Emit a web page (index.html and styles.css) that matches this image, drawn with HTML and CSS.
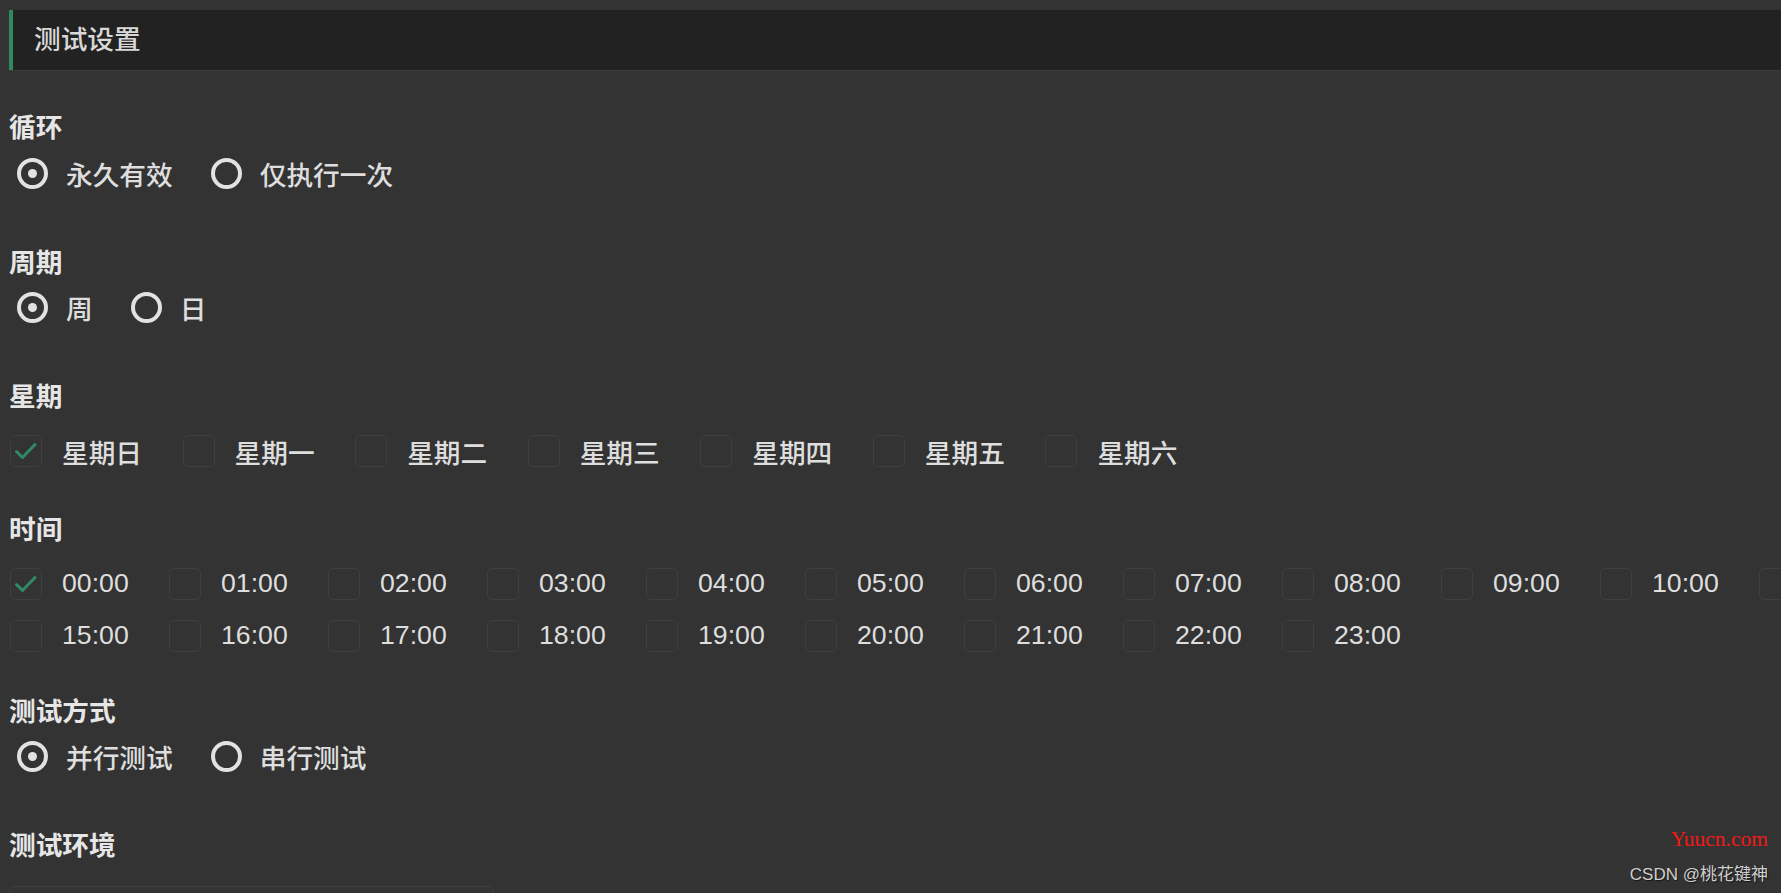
FILE: index.html
```html
<!DOCTYPE html>
<html lang="zh-CN">
<head>
<meta charset="utf-8">
<title>测试设置</title>
<link rel="stylesheet" href="styles.css">
</head>
<body>
<div class="page">
  <div class="panel-title">测试设置</div>

  <div class="field field-first">
    <div class="field-label">循环</div>
    <div class="radio-group">
      <label class="radio checked"><span class="radio-circle"></span><span class="radio-text">永久有效</span></label>
      <label class="radio"><span class="radio-circle"></span><span class="radio-text">仅执行一次</span></label>
    </div>
  </div>

  <div class="field">
    <div class="field-label">周期</div>
    <div class="radio-group">
      <label class="radio checked"><span class="radio-circle"></span><span class="radio-text">周</span></label>
      <label class="radio"><span class="radio-circle"></span><span class="radio-text">日</span></label>
    </div>
  </div>

  <div class="field field-week">
    <div class="field-label">星期</div>
    <div class="check-row">
      <label class="check checked"><span class="check-box"><svg viewBox="0 0 32 32" width="32" height="32"><polyline points="6.5,16.5 12.5,22.5 25,9.5" fill="none" stroke="#2f8c62" stroke-width="3" stroke-linecap="round" stroke-linejoin="round"/></svg></span><span class="check-text">星期日</span></label>
      <label class="check"><span class="check-box"></span><span class="check-text">星期一</span></label>
      <label class="check"><span class="check-box"></span><span class="check-text">星期二</span></label>
      <label class="check"><span class="check-box"></span><span class="check-text">星期三</span></label>
      <label class="check"><span class="check-box"></span><span class="check-text">星期四</span></label>
      <label class="check"><span class="check-box"></span><span class="check-text">星期五</span></label>
      <label class="check"><span class="check-box"></span><span class="check-text">星期六</span></label>
    </div>
  </div>

  <div class="field field-time">
    <div class="field-label">时间</div>
    <div class="time-grid">
      <label class="check checked"><span class="check-box"><svg viewBox="0 0 32 32" width="32" height="32"><polyline points="6.5,16.5 12.5,22.5 25,9.5" fill="none" stroke="#2f8c62" stroke-width="3" stroke-linecap="round" stroke-linejoin="round"/></svg></span><span class="check-text">00:00</span></label>
      <label class="check"><span class="check-box"></span><span class="check-text">01:00</span></label>
      <label class="check"><span class="check-box"></span><span class="check-text">02:00</span></label>
      <label class="check"><span class="check-box"></span><span class="check-text">03:00</span></label>
      <label class="check"><span class="check-box"></span><span class="check-text">04:00</span></label>
      <label class="check"><span class="check-box"></span><span class="check-text">05:00</span></label>
      <label class="check"><span class="check-box"></span><span class="check-text">06:00</span></label>
      <label class="check"><span class="check-box"></span><span class="check-text">07:00</span></label>
      <label class="check"><span class="check-box"></span><span class="check-text">08:00</span></label>
      <label class="check"><span class="check-box"></span><span class="check-text">09:00</span></label>
      <label class="check"><span class="check-box"></span><span class="check-text">10:00</span></label>
      <label class="check"><span class="check-box"></span><span class="check-text">11:00</span></label>
      <label class="check"><span class="check-box"></span><span class="check-text">12:00</span></label>
      <label class="check"><span class="check-box"></span><span class="check-text">13:00</span></label>
      <label class="check"><span class="check-box"></span><span class="check-text">14:00</span></label>
      <label class="check"><span class="check-box"></span><span class="check-text">15:00</span></label>
      <label class="check"><span class="check-box"></span><span class="check-text">16:00</span></label>
      <label class="check"><span class="check-box"></span><span class="check-text">17:00</span></label>
      <label class="check"><span class="check-box"></span><span class="check-text">18:00</span></label>
      <label class="check"><span class="check-box"></span><span class="check-text">19:00</span></label>
      <label class="check"><span class="check-box"></span><span class="check-text">20:00</span></label>
      <label class="check"><span class="check-box"></span><span class="check-text">21:00</span></label>
      <label class="check"><span class="check-box"></span><span class="check-text">22:00</span></label>
      <label class="check"><span class="check-box"></span><span class="check-text">23:00</span></label>
    </div>
  </div>

  <div class="field">
    <div class="field-label">测试方式</div>
    <div class="radio-group">
      <label class="radio checked"><span class="radio-circle"></span><span class="radio-text">并行测试</span></label>
      <label class="radio"><span class="radio-circle"></span><span class="radio-text">串行测试</span></label>
    </div>
  </div>

  <div class="field field-last">
    <div class="field-label">测试环境</div>
    <div class="select-box"></div>
  </div>
</div>

<div class="watermark">
  <div class="wm-site">Yuucn.com</div>
  <div class="wm-author">CSDN @桃花键神</div>
</div>
</body>
</html>
```

FILE: styles.css
```css
html, body {
  margin: 0;
  padding: 0;
  background: #333333;
  overflow: hidden;
  height: 100%;
}

body {
  font-family: "Liberation Sans", "Noto Sans CJK SC", sans-serif;
  color: #dcdcdc;
  position: relative;
}

.page {
  padding: 10px 0 0 9px;
}

.panel-title {
  height: 60px;
  line-height: 60px;
  background: #222222;
  border-left: 4px solid #2e8b5e;
  padding-left: 21px;
  font-size: 26.7px;
  font-weight: 500;
  color: #d8d8d8;
  box-shadow: 0 1px 1px rgba(255, 255, 255, 0.04);
}

.field {
  padding-bottom: 53.5px;
}

.field-first {
  margin-top: 38px;
}

.field-week {
  padding-bottom: 42.5px;
}

.field-time {
  padding-bottom: 40px;
}

.field-last {
  padding-bottom: 0;
}

.field-label {
  padding-top: 2px;
  font-size: 26.7px;
  font-weight: bold;
  line-height: 36px;
  color: #e6e6e6;
}

.radio-group {
  display: flex;
  margin-top: 11px;
}

.radio {
  display: flex;
  align-items: center;
  height: 32px;
  margin-right: 30px;
}

.radio-circle {
  box-sizing: border-box;
  width: 31px;
  height: 31px;
  margin-left: 8px;
  border: 4px solid #e2e2e2;
  border-radius: 50%;
  display: flex;
  align-items: center;
  justify-content: center;
}

.radio.checked .radio-circle::after {
  content: "";
  width: 9px;
  height: 9px;
  border-radius: 50%;
  background: #e2e2e2;
}

.radio-text {
  margin-left: 18px;
  font-size: 26.7px;
  font-weight: 500;
  color: #dedede;
}

.check-row {
  display: flex;
  margin-top: 20px;
}

.check-row .check {
  margin-right: 39.5px;
}

.check {
  display: flex;
  align-items: center;
  height: 32px;
}

.check-box {
  box-sizing: border-box;
  width: 32px;
  height: 32px;
  margin-left: 1px;
  border: 1.5px solid #3f3f3f;
  border-radius: 5px;
  display: flex;
  align-items: center;
  justify-content: center;
  flex: none;
}

.check-box svg {
  display: block;
  flex: none;
}

.check-text {
  margin-left: 20px;
  font-size: 26.7px;
  font-weight: 500;
  color: #dedede;
  white-space: nowrap;
}

.time-grid {
  display: grid;
  grid-template-columns: repeat(15, 159px);
  row-gap: 20px;
  margin-top: 20px;
  width: 2385px;
}

.select-box {
  margin-top: 22px;
  width: 485px;
  height: 60px;
  box-sizing: border-box;
  border: 1.5px solid #3f3f3f;
  border-radius: 6px;
}

.watermark {
  position: absolute;
  right: 13px;
  bottom: 6px;
  text-align: right;
}

.wm-site {
  font-family: "Liberation Serif", serif;
  font-size: 21.5px;
  color: #f01a1a;
  line-height: 24px;
}

.wm-author {
  margin-top: 12px;
  font-family: "Liberation Sans", "Noto Sans CJK SC", sans-serif;
  font-size: 17px;
  color: #cfcfcf;
  line-height: 24px;
  text-shadow: 1px 1px 1px rgba(0, 0, 0, 0.6);
}
```
